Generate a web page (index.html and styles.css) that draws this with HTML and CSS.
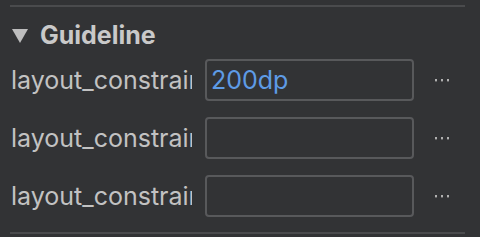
FILE: index.html
```html
<!DOCTYPE html>
<html>
<head>
<meta charset="utf-8">
<link rel="stylesheet" href="styles.css">
</head>
<body>
<div class="panel">
  <div class="rule"></div>
  <div class="header">
    <span class="caret"></span>
    <span class="title">Guideline</span>
  </div>
  <div class="rows">
    <div class="row">
      <div class="label">layout_constraintGuide_begin</div>
      <div class="field"><span class="value">200dp</span></div>
      <svg class="more" width="14" height="3" viewBox="0 0 14 3"><rect x="0" y="0" width="2" height="2.4"/><rect x="6" y="0" width="2" height="2.4"/><rect x="12" y="0" width="2" height="2.4"/></svg>
    </div>
    <div class="row">
      <div class="label">layout_constraintGuide_end</div>
      <div class="field"></div>
      <svg class="more" width="14" height="3" viewBox="0 0 14 3"><rect x="0" y="0" width="2" height="2.4"/><rect x="6" y="0" width="2" height="2.4"/><rect x="12" y="0" width="2" height="2.4"/></svg>
    </div>
    <div class="row">
      <div class="label">layout_constraintGuide_percent</div>
      <div class="field"></div>
      <svg class="more" width="14" height="3" viewBox="0 0 14 3"><rect x="0" y="0" width="2" height="2.4"/><rect x="6" y="0" width="2" height="2.4"/><rect x="12" y="0" width="2" height="2.4"/></svg>
    </div>
  </div>
  <div class="rule bottom"></div>
</div>
</body>
</html>
```
FILE: styles.css
```css
html, body {
  margin: 0;
  padding: 0;
  background: #323335;
  width: 480px;
  height: 237px;
  overflow: hidden;
  font-family: "Inter", "Noto Sans", sans-serif;
}
.panel {
  padding: 5px 15px 0 10px;
}
.rule {
  height: 2px;
  width: 455px;
  background: #4a4b4d;
}
.rule.bottom {
  margin-top: 15px;
}
.header {
  box-sizing: border-box;
  display: flex;
  align-items: center;
  height: 52px;
  padding-left: 2px;
  padding-top: 4px;
}
.caret {
  width: 0;
  height: 0;
  border-left: 8px solid transparent;
  border-right: 8px solid transparent;
  border-top: 14px solid #bdbdbd;
  margin-right: 12px;
  margin-top: 1px;
}
.title {
  font-weight: 700;
  font-size: 25px;
  color: #c9c9c9;
  line-height: 1;
}
.rows {
  display: flex;
  flex-direction: column;
  gap: 16px;
}
.row {
  display: flex;
  align-items: center;
  height: 42px;
}
.label {
  width: 181px;
  margin-left: 1px;
  margin-right: 13px;
  white-space: nowrap;
  overflow: hidden;
  text-overflow: clip;
  font-size: 25px;
  color: #c2c2c2;
}
.field {
  box-sizing: border-box;
  width: 209px;
  height: 42px;
  border: 2px solid #58595b;
  border-radius: 4px;
  display: flex;
  align-items: center;
  padding-left: 4px;
}
.value {
  font-size: 25px;
  color: #5e9be6;
}
.more {
  margin-left: 21px;
  fill: #b0b0b0;
}
```
